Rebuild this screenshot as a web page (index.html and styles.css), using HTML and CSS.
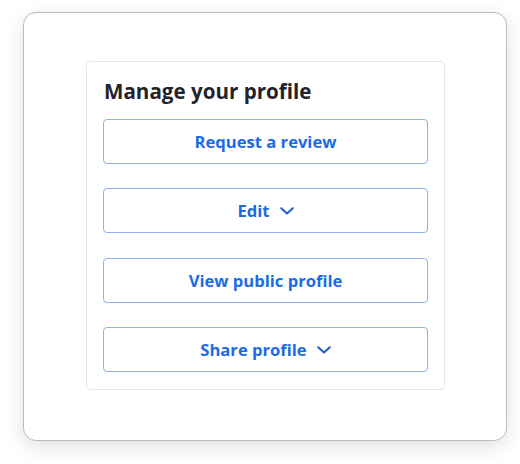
FILE: index.html
```html
<!DOCTYPE html>
<html lang="en">
<head>
<meta charset="utf-8">
<title>Manage your profile</title>
<link rel="stylesheet" href="styles.css">
</head>
<body>
<div class="frame">
  <section class="card">
    <h2 class="title">Manage your profile</h2>
    <div class="actions">
      <button class="btn" type="button">Request a review</button>
      <button class="btn" type="button">Edit
        <svg class="chev" viewBox="0 0 14 8" width="14" height="8"><path d="M1.2 1.2 L7 6.6 L12.8 1.2" fill="none" stroke="currentColor" stroke-width="2" stroke-linecap="round" stroke-linejoin="round"/></svg>
      </button>
      <button class="btn" type="button">View public profile</button>
      <button class="btn" type="button">Share profile
        <svg class="chev" viewBox="0 0 14 8" width="14" height="8"><path d="M1.2 1.2 L7 6.6 L12.8 1.2" fill="none" stroke="currentColor" stroke-width="2" stroke-linecap="round" stroke-linejoin="round"/></svg>
      </button>
    </div>
  </section>
</div>
</body>
</html>
```
FILE: styles.css
```css
* { box-sizing: border-box; }
html, body { margin: 0; padding: 0; background: #ffffff; }
body {
  width: 520px;
  height: 464px;
  padding: 12px 13px 0 23px;
  font-family: "Open Sans", "Noto Sans", sans-serif;
}
.frame {
  width: 484px;
  height: 429px;
  border: 1px solid #bcbcbc;
  border-radius: 13px;
  background: #fff;
  box-shadow: 0 6px 20px rgba(0, 0, 0, 0.12);
  padding: 48px 0 0 62px;
}
.card {
  width: 359px;
  height: 329px;
  border: 1px solid #e6e6e6;
  border-radius: 4px;
  padding: 16px 16px 16px 16px;
  background: #fff;
}
.title {
  margin: 0 0 15px 1px;
  font-size: 20.6px;
  line-height: 26px;
  font-weight: 700;
  color: #23232b;
}
.actions {
  display: flex;
  flex-direction: column;
  gap: 24.4px;
}
.btn {
  display: flex;
  align-items: center;
  justify-content: center;
  gap: 10px;
  height: 45px;
  width: 100%;
  border: 1px solid #8db2ef;
  border-radius: 4px;
  background: #fff;
  color: #1a6ce6;
  font-family: "Open Sans", "Noto Sans", sans-serif;
  font-size: 16.6px;
  font-weight: 700;
  padding: 0;
  cursor: pointer;
}
.chev { display: block; margin-top: 1px; color: #1a5fd0; }
```
